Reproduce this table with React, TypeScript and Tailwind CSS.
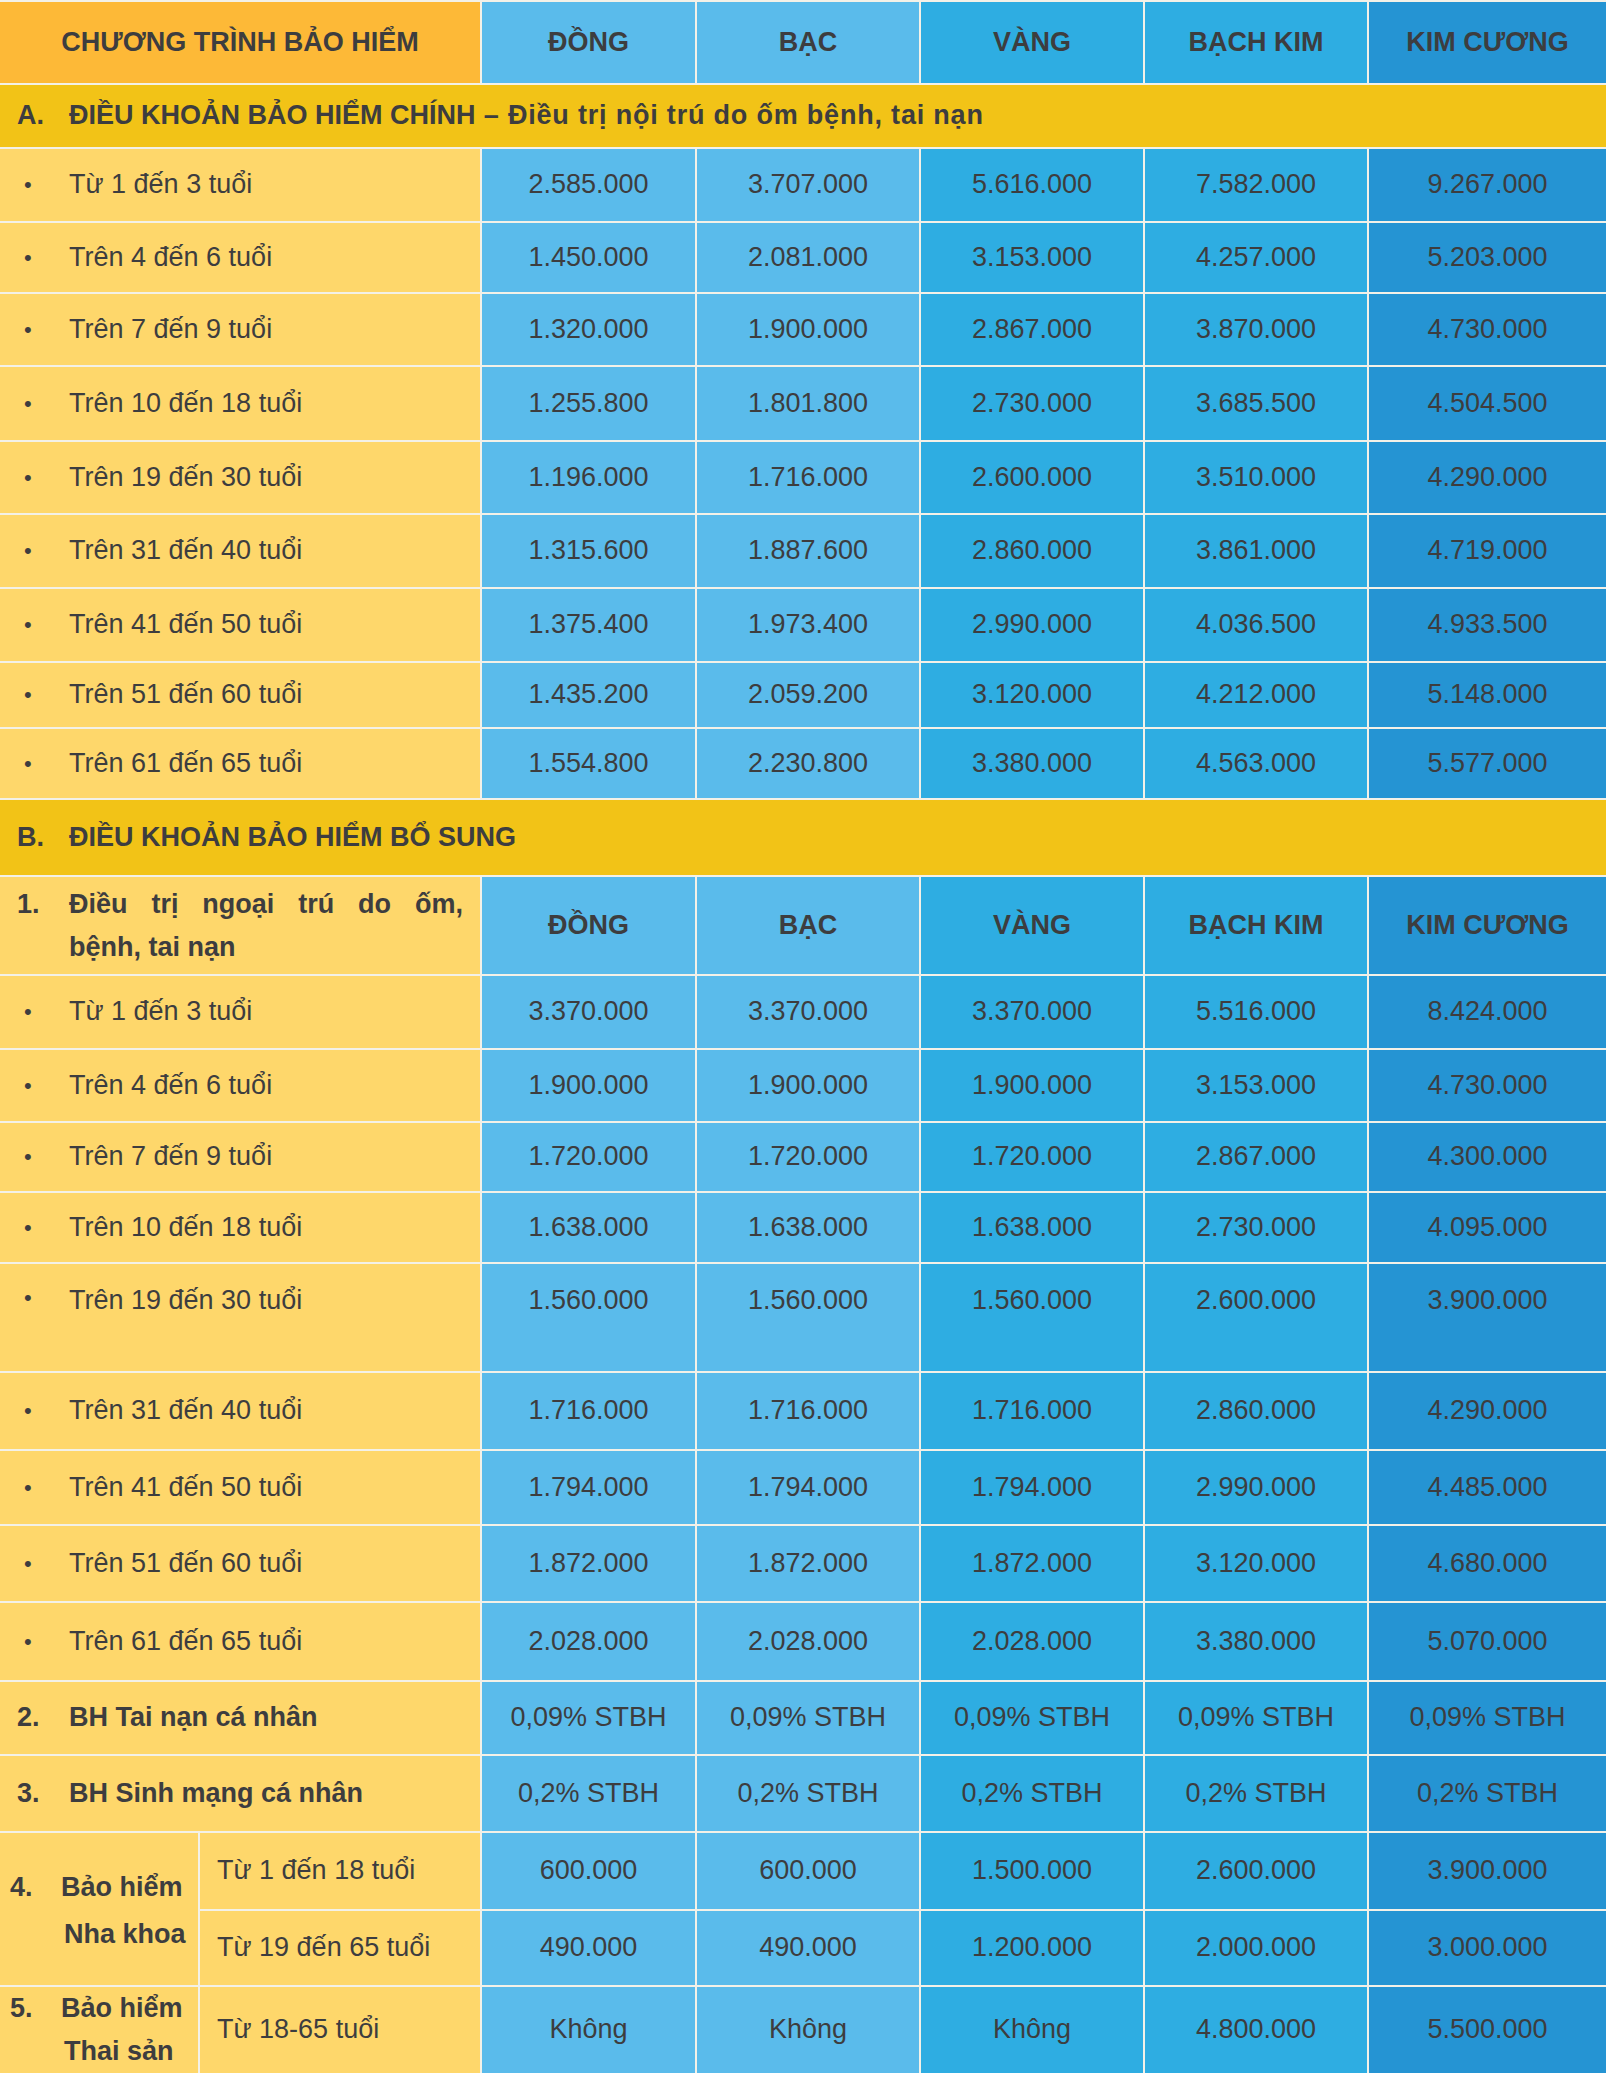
import React from 'react';

type Row = { label: string; values: string[] };

const tiers = ['ĐỒNG', 'BẠC', 'VÀNG', 'BẠCH KIM', 'KIM CƯƠNG'];

// màu nền theo từng cột hạng
const tierBg = ['bg-[#5abbeb]', 'bg-[#5abbeb]', 'bg-[#2eade2]', 'bg-[#2eade2]', 'bg-[#2594d3]'];

const mainRows: Row[] = [
  { label: 'Từ 1 đến 3 tuổi', values: ['2.585.000', '3.707.000', '5.616.000', '7.582.000', '9.267.000'] },
  { label: 'Trên 4 đến 6 tuổi', values: ['1.450.000', '2.081.000', '3.153.000', '4.257.000', '5.203.000'] },
  { label: 'Trên 7 đến 9 tuổi', values: ['1.320.000', '1.900.000', '2.867.000', '3.870.000', '4.730.000'] },
  { label: 'Trên 10 đến 18 tuổi', values: ['1.255.800', '1.801.800', '2.730.000', '3.685.500', '4.504.500'] },
  { label: 'Trên 19 đến 30 tuổi', values: ['1.196.000', '1.716.000', '2.600.000', '3.510.000', '4.290.000'] },
  { label: 'Trên 31 đến 40 tuổi', values: ['1.315.600', '1.887.600', '2.860.000', '3.861.000', '4.719.000'] },
  { label: 'Trên 41 đến 50 tuổi', values: ['1.375.400', '1.973.400', '2.990.000', '4.036.500', '4.933.500'] },
  { label: 'Trên 51 đến 60 tuổi', values: ['1.435.200', '2.059.200', '3.120.000', '4.212.000', '5.148.000'] },
  { label: 'Trên 61 đến 65 tuổi', values: ['1.554.800', '2.230.800', '3.380.000', '4.563.000', '5.577.000'] },
];

const outpatientRows: Row[] = [
  { label: 'Từ 1 đến 3 tuổi', values: ['3.370.000', '3.370.000', '3.370.000', '5.516.000', '8.424.000'] },
  { label: 'Trên 4 đến 6 tuổi', values: ['1.900.000', '1.900.000', '1.900.000', '3.153.000', '4.730.000'] },
  { label: 'Trên 7 đến 9 tuổi', values: ['1.720.000', '1.720.000', '1.720.000', '2.867.000', '4.300.000'] },
  { label: 'Trên 10 đến 18 tuổi', values: ['1.638.000', '1.638.000', '1.638.000', '2.730.000', '4.095.000'] },
  { label: 'Trên 19 đến 30 tuổi', values: ['1.560.000', '1.560.000', '1.560.000', '2.600.000', '3.900.000'] },
  { label: 'Trên 31 đến 40 tuổi', values: ['1.716.000', '1.716.000', '1.716.000', '2.860.000', '4.290.000'] },
  { label: 'Trên 41 đến 50 tuổi', values: ['1.794.000', '1.794.000', '1.794.000', '2.990.000', '4.485.000'] },
  { label: 'Trên 51 đến 60 tuổi', values: ['1.872.000', '1.872.000', '1.872.000', '3.120.000', '4.680.000'] },
  { label: 'Trên 61 đến 65 tuổi', values: ['2.028.000', '2.028.000', '2.028.000', '3.380.000', '5.070.000'] },
];

const ValueCells = ({ values, top = false }: { values: string[]; top?: boolean }) => (
  <>
    {values.map((v, i) => (
      <div
        key={i}
        className={`${tierBg[i]} flex justify-center ${top ? 'items-start pt-[20px]' : 'items-center'}`}
      >
        {v}
      </div>
    ))}
  </>
);

const BulletRow = ({ row, top = false }: { row: Row; top?: boolean }) => (
  <>
    <div className={`col-span-2 bg-[#fed76b] flex pl-[24px] ${top ? 'items-start pt-[20px]' : 'items-center'}`}>
      <span className="w-[45px] text-[22px]">•</span>
      <span>{row.label}</span>
    </div>
    <ValueCells values={row.values} top={top} />
  </>
);

const TierHeader = () => (
  <>
    {tiers.map((t, i) => (
      <div key={t} className={`${tierBg[i]} flex items-center justify-center font-bold`}>
        {t}
      </div>
    ))}
  </>
);

export default function App() {
  return (
    <div className="w-[1606px] bg-[#f3f1e8] pt-[2px] text-[27px] leading-tight text-[#3d3d3f] font-['Liberation_Sans',_Arial,_sans-serif]">
      <div className="grid grid-cols-[198px_280px_213px_222px_222px_222px_1fr] grid-rows-[81px_62px_72px_69px_71px_73px_71px_72px_72px_64px_69px_75px_97px_72px_71px_68px_69px_107px_76px_73px_75px_77px_72px_75px_76px_74px_86px] gap-[2px]">
        {/* tiêu đề */}
        <div className="col-span-2 bg-[#fdb937] flex items-center justify-center font-bold">
          CHƯƠNG TRÌNH BẢO HIỂM
        </div>
        <TierHeader />

        {/* A */}
        <div className="col-span-7 bg-[#f2c317] flex items-center pl-[17px] font-bold whitespace-pre">
          <span className="w-[52px]">A.</span>
          <span>ĐIỀU KHOẢN BẢO HIỂM CHÍNH</span>
          <span className="tracking-[0.8px]"> – Điều trị nội trú do ốm bệnh, tai nạn</span>
        </div>
        {mainRows.map((r) => (
          <BulletRow key={'a' + r.label} row={r} />
        ))}

        {/* B */}
        <div className="col-span-7 bg-[#f2c317] flex items-center pl-[17px] font-bold">
          <span className="w-[52px]">B.</span>
          <span>ĐIỀU KHOẢN BẢO HIỂM BỔ SUNG</span>
        </div>

        <div className="col-span-2 bg-[#fed76b] flex items-start pt-[6px] pl-[17px] pr-[17px] font-bold leading-[43px]">
          <span className="w-[52px]">1.</span>
          <div className="flex-1">
            <span className="block text-justify [text-align-last:justify]">Điều trị ngoại trú do ốm,</span>
            <span className="block">bệnh, tai nạn</span>
          </div>
        </div>
        <TierHeader />

        {outpatientRows.map((r) => (
          <BulletRow key={'b' + r.label} row={r} top={r.label === 'Trên 19 đến 30 tuổi'} />
        ))}

        <div className="col-span-2 bg-[#fed76b] flex items-center pl-[17px] font-bold">
          <span className="w-[52px]">2.</span>
          <span>BH Tai nạn cá nhân</span>
        </div>
        <ValueCells values={['0,09% STBH', '0,09% STBH', '0,09% STBH', '0,09% STBH', '0,09% STBH']} />

        <div className="col-span-2 bg-[#fed76b] flex items-center pl-[17px] font-bold">
          <span className="w-[52px]">3.</span>
          <span>BH Sinh mạng cá nhân</span>
        </div>
        <ValueCells values={['0,2% STBH', '0,2% STBH', '0,2% STBH', '0,2% STBH', '0,2% STBH']} />

        <div className="row-span-2 bg-[#fed76b] flex items-start pt-[31px] pl-[10px] font-bold leading-[47px]">
          <span className="w-[51px]">4.</span>
          <div>
            <span className="block">Bảo hiểm</span>
            <span className="block pl-[3px]">Nha khoa</span>
          </div>
        </div>
        <div className="bg-[#fed76b] flex items-center pl-[17px]">Từ 1 đến 18 tuổi</div>
        <ValueCells values={['600.000', '600.000', '1.500.000', '2.600.000', '3.900.000']} />
        <div className="bg-[#fed76b] flex items-center pl-[17px]">Từ 19 đến 65 tuổi</div>
        <ValueCells values={['490.000', '490.000', '1.200.000', '2.000.000', '3.000.000']} />

        <div className="bg-[#fed76b] flex items-center pl-[10px] font-bold leading-[43px]">
          <span className="w-[51px] self-start">5.</span>
          <div>
            <span className="block">Bảo hiểm</span>
            <span className="block pl-[3px]">Thai sản</span>
          </div>
        </div>
        <div className="bg-[#fed76b] flex items-center pl-[17px]">Từ 18-65 tuổi</div>
        <ValueCells values={['Không', 'Không', 'Không', '4.800.000', '5.500.000']} />
      </div>
    </div>
  );
}
